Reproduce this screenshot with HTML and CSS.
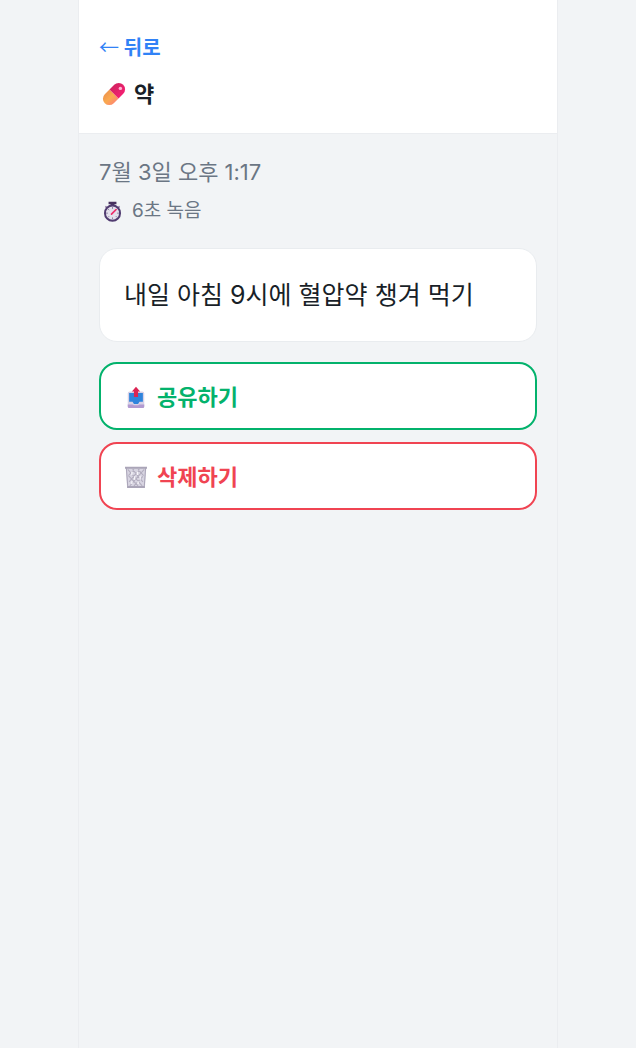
FILE: index.html
```html
<!DOCTYPE html>
<html lang="ko">
<head>
<meta charset="utf-8">
<meta name="viewport" content="width=device-width, initial-scale=1">
<title>약</title>
<link rel="stylesheet" href="styles.css">
</head>
<body>
<div class="app">
  <header class="header">
    <button type="button" class="back"><span class="arrow">←</span> 뒤로</button>
    <h1 class="title">
      <svg class="icon-pill" viewBox="0 0 32 32" aria-hidden="true">
        <defs>
          <linearGradient id="pill-top" x1="0" y1="0" x2="1" y2="1"><stop offset="0" stop-color="#c8235a"/><stop offset="1" stop-color="#ff1f78"/></linearGradient>
          <linearGradient id="pill-low" x1="0" y1="0" x2="1" y2="1"><stop offset="0" stop-color="#e88a4c"/><stop offset=".5" stop-color="#faa94f"/><stop offset="1" stop-color="#ff7683"/></linearGradient>
        </defs>
        <path fill="url(#pill-low)" d="M10 10 3.700 16.300a8.400 8.400 0 0 0 12 12L22 22z"/>
        <path fill="url(#pill-top)" d="M10 10l6.300-6.300a8.400 8.400 0 0 1 12 12L22 22z"/>
        <circle cx="24.500" cy="8.500" r="2.300" fill="#ffb3d1"/>
      </svg>
      약
    </h1>
  </header>
  <main class="content">
    <p class="date">7월 3일 오후 1:17</p>
    <p class="length">
      <svg class="icon-watch" viewBox="0 0 32 32" aria-hidden="true">
        <path fill="#47305f" d="M10 1h12v4h-3v4h-6V5h-3z"/>
        <path stroke="#9b8bad" stroke-width="3" stroke-linecap="round" d="M6 9l2 2M26 9l-2 2"/>
        <circle cx="16" cy="18.500" r="11.500" fill="#e4e0ec" stroke="#503b70" stroke-width="3"/>
        <path stroke="#8f84a3" stroke-width="1.500" d="M16 9v3M16 25v3M6 18.500h3M23 18.500h3M9 12l2 2M9 25l2-2M23 25l-2-2"/>
        <path stroke="#ee2b69" stroke-width="2.500" stroke-linecap="round" d="M14.500 20l7-7"/>
      </svg>
      6초 녹음
    </p>
    <section class="memo">내일 아침 9시에 혈압약 챙겨 먹기</section>
    <div class="actions">
      <button type="button" class="action share">
        <svg class="icon-action" viewBox="0 0 32 32" aria-hidden="true">
          <rect x="4" y="8" width="24" height="24" rx="3" fill="#d8d1e6"/>
          <path fill="#b29ad1" d="M4 27h7l2 1h6l2-1h7v3q0 2-2 2H6q-2 0-2-2z"/>
          <path fill="#2f84dc" d="M6 10h20v13h-5l-2 3h-6l-2-3H6z"/>
          <path fill="#dc2453" d="M16 1l6 7h-3v8h-6V8h-3z"/>
        </svg>
        공유하기
      </button>
      <button type="button" class="action delete">
        <svg class="icon-action" viewBox="0 0 32 32" aria-hidden="true">
          <path fill="#d8d5e2" d="M1 2h30l-2 29H3z"/>
          <path fill="none" stroke="#b3aebf" stroke-width="1.500" d="M4 5l21 24M11 5l15 18M19 5l8 9M28 5L7 29M21 5L6 23M13 5l-8 9M13 29l13-14M19 29L5 14"/>
          <path fill="#f7f6fa" d="M9 8h2v5H9zM17 8h2v5h-2zM13 15h2v5h-2zM21 15h2v5h-2zM9 22h2v4H9zM18 22h2v4h-2z"/>
          <path fill="#aaa5b8" d="M0 1h32v3H0zM3 29h26v3H3z"/>
          <path fill="none" stroke="#aba6b9" stroke-width="1.500" d="M2 3l2 27M30 3l-2 27"/>
        </svg>
        삭제하기
      </button>
    </div>
  </main>
</div>
</body>
</html>
```
FILE: styles.css
```css
* {
  box-sizing: border-box;
}

body {
  margin: 0;
  background: #f2f4f6;
  color: #191f28;
  font-family: Inter, "Noto Sans CJK KR", sans-serif;
}

button {
  font: inherit;
  cursor: pointer;
}

h1,
p {
  margin: 0;
}

.app {
  max-width: 480px;
  min-height: 100vh;
  margin: 0 auto;
  border: solid #ebedf0;
  border-width: 0 1px;
}

.header {
  padding: 32px 20px 20px;
  border-bottom: 1px solid #ebedf0;
  background: #fff;
}

.back {
  display: block;
  padding: 0;
  border: 0;
  background: none;
  color: #3182f6;
  font-size: 20px;
  font-weight: 700;
  line-height: 30px;
}

.arrow {
  font-family: "Noto Sans CJK KR", sans-serif;
  font-weight: 400;
}

.title {
  display: flex;
  align-items: center;
  gap: 8px;
  margin-top: 12px;
  padding-left: 3px;
  font-size: 22px;
  font-weight: 700;
  line-height: 38px;
}

.icon-pill {
  width: 24px;
  height: 24px;
}

.content {
  padding: 20px;
}

.date {
  color: #6b7684;
  font-size: 22px;
  line-height: 36px;
}

.length {
  display: flex;
  align-items: center;
  gap: 9px;
  margin-top: 4px;
  padding-left: 3px;
  color: #6b7684;
  font-size: 19px;
  line-height: 34px;
}

.icon-watch {
  width: 21px;
  height: 21px;
}

.memo {
  margin-top: 20px;
  padding: 24px;
  border: 1px solid #e9ecef;
  border-radius: 18px;
  background: #fff;
  font-size: 25px;
  line-height: 44px;
}

.actions {
  display: grid;
  gap: 12px;
  margin-top: 20px;
}

.action {
  display: flex;
  align-items: center;
  gap: 10px;
  min-height: 68px;
  padding: 2px 24px 0;
  border: 2px solid;
  border-radius: 18px;
  background: #fff;
  font-size: 22px;
  font-weight: 700;
  line-height: 32px;
}

.icon-action {
  width: 22px;
  height: 22px;
}

.share {
  color: #03b26c;
}

.delete {
  color: #f04452;
}
```
